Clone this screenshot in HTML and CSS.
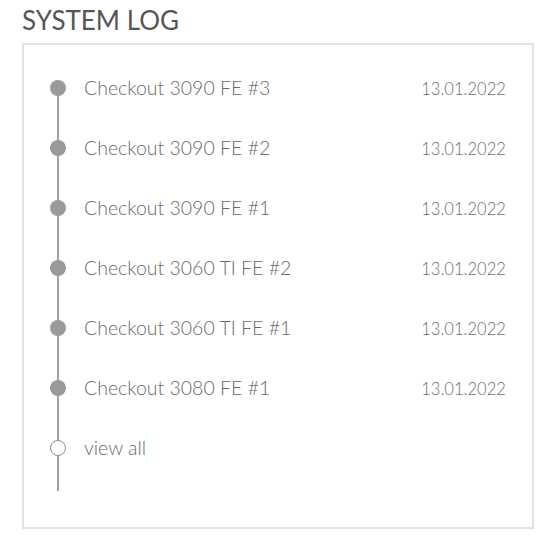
FILE: index.html
```html
<!DOCTYPE html>
<html>
<head>
<meta charset="utf-8">
<link rel="stylesheet" href="styles.css">
</head>
<body>
<h2 class="title">SYSTEM LOG</h2>
<div class="card">
  <ul class="timeline">
    <li class="entry"><span class="dot"></span><span class="name">Checkout 3090 FE #3</span><span class="date">13.01.2022</span></li>
    <li class="entry"><span class="dot"></span><span class="name">Checkout 3090 FE #2</span><span class="date">13.01.2022</span></li>
    <li class="entry"><span class="dot"></span><span class="name">Checkout 3090 FE #1</span><span class="date">13.01.2022</span></li>
    <li class="entry"><span class="dot"></span><span class="name">Checkout 3060 TI FE #2</span><span class="date">13.01.2022</span></li>
    <li class="entry"><span class="dot"></span><span class="name">Checkout 3060 TI FE #1</span><span class="date">13.01.2022</span></li>
    <li class="entry"><span class="dot"></span><span class="name">Checkout 3080 FE #1</span><span class="date">13.01.2022</span></li>
    <li class="entry"><span class="dot hollow"></span><span class="name">view all</span></li>
  </ul>
</div>
</body>
</html>
```
FILE: styles.css
```css
html, body {
  margin: 0;
  padding: 0;
  background: #fff;
}
body {
  font-family: Lato, "Liberation Sans", sans-serif;
  padding: 4px 17px 0 22px;
}
.title {
  margin: 0 0 6px 0;
  font-size: 26px;
  font-weight: 400;
  line-height: 33px;
  color: #555;
}
.card {
  width: 508px;
  height: 482px;
  border: 2px solid #e2e2e2;
}
.timeline {
  list-style: none;
  margin: 0;
  padding: 13px 26px 13px 26px;
  position: relative;
}
.timeline::before {
  content: "";
  position: absolute;
  left: 33px;
  top: 43px;
  bottom: 0;
  width: 2px;
  background: #a0a0a0;
}
.entry {
  height: 60px;
  display: flex;
  align-items: center;
}
.dot {
  width: 16px;
  height: 16px;
  border-radius: 50%;
  background: #9a9a9a;
  box-sizing: border-box;
  flex: none;
  position: relative;
  z-index: 1;
}
.dot.hollow {
  background: #fff;
  border: 1px solid #8a8a8a;
}
.name {
  margin-left: 18px;
  padding-bottom: 2px;
  font-size: 19.5px;
  font-weight: 300;
  color: #6a6a6a;
  flex: 1;
}
.date {
  padding-top: 2px;
  font-size: 16.6px;
  font-weight: 300;
  color: #6a6e78;
}
```
